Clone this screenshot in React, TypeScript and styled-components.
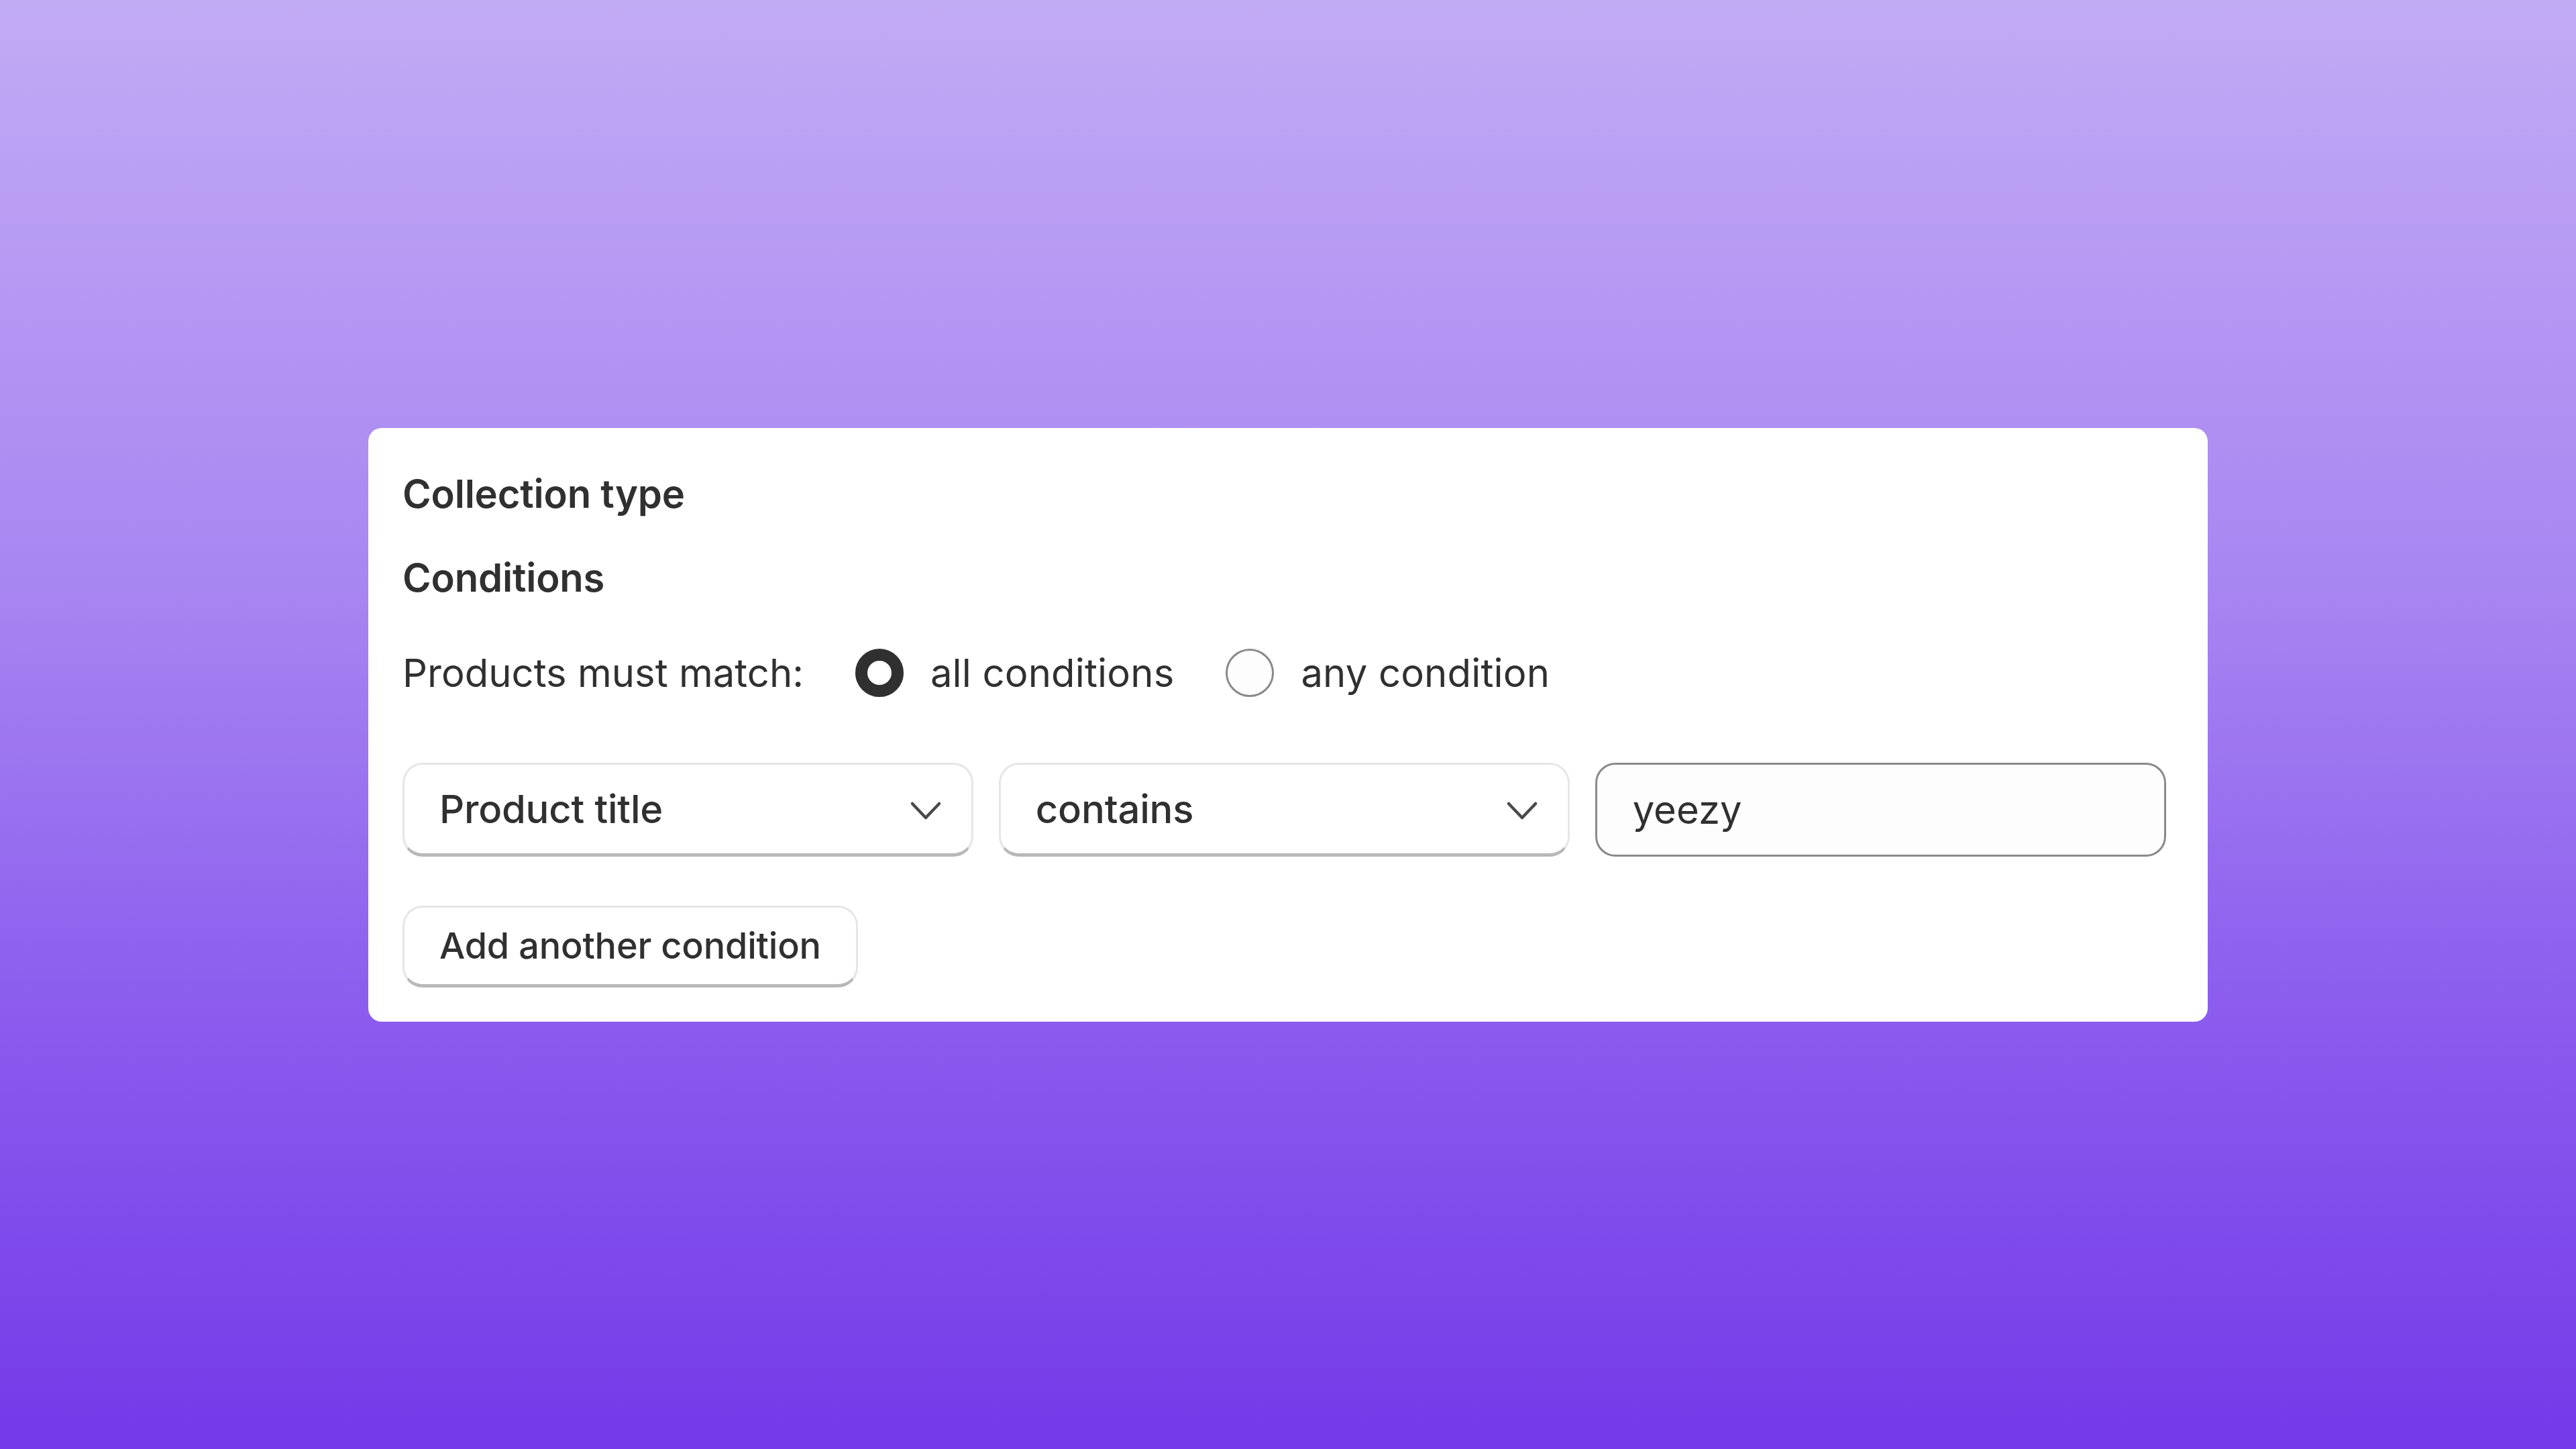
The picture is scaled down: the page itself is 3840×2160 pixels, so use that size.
import React from "react";
import styled, { createGlobalStyle } from "styled-components";

const GlobalStyle = createGlobalStyle`
  html, body {
    margin: 0;
    padding: 0;
  }
  body {
    font-family: Inter, "Noto Sans", "Liberation Sans", sans-serif;
    color: #303030;
  }
`;

const Page = styled.div`
  width: 100vw;
  height: 100vh;
  display: flex;
  align-items: center;
  justify-content: center;
  background: linear-gradient(180deg, #c2abf5 0%, #a886f1 40%, #8b5cee 70%, #7439e8 100%);
`;

const Card = styled.section`
  width: 2742px;
  box-sizing: border-box;
  padding: 63px 62px 51px 51px;
  background: #ffffff;
  border-radius: 20px;
  display: flex;
  flex-direction: column;
`;

const Heading = styled.h2<{ gapAfter: number }>`
  margin: 0 0 ${({ gapAfter }) => gapAfter}px;
  font-size: 58px;
  line-height: 70px;
  font-weight: 600;
  letter-spacing: -0.2px;
`;

const MatchRow = styled.div`
  display: flex;
  align-items: center;
  height: 72px;
  font-size: 58px;
  line-height: 70px;
  margin-bottom: 98px;
`;

const MatchLabel = styled.span`
  margin-right: 77px;
`;

const RadioOption = styled.label`
  display: flex;
  align-items: center;
  gap: 40px;
  margin-right: 77px;
  letter-spacing: 0.15px;
  cursor: pointer;
`;

const RadioDot = styled.span<{ checked: boolean }>`
  width: 72px;
  height: 72px;
  box-sizing: border-box;
  border-radius: 50%;
  border: ${({ checked }) => (checked ? "18px solid #303030" : "3px solid #8a8a8a")};
  background: ${({ checked }) => (checked ? "#ffffff" : "#fdfdfd")};
  flex-shrink: 0;
`;

const ConditionRow = styled.div`
  display: grid;
  grid-template-columns: repeat(3, 1fr);
  column-gap: 37.5px;
  margin-bottom: 73px;
`;

const SelectBox = styled.div`
  height: 140px;
  box-sizing: border-box;
  display: flex;
  align-items: center;
  justify-content: space-between;
  padding: 0 44px 0 52px;
  border: 3px solid #e6e6e6;
  border-bottom: 5px solid #b8b8b8;
  border-radius: 30px;
  background: #ffffff;
  font-size: 58px;
  line-height: 70px;
  font-weight: 500;
  letter-spacing: -0.2px;
`;

const TextInput = styled.div`
  height: 140px;
  box-sizing: border-box;
  display: flex;
  align-items: center;
  padding: 0 53px;
  border: 3px solid #8a8a8a;
  border-radius: 30px;
  background: #fdfdfd;
  font-size: 58px;
  line-height: 70px;
`;

const Chevron = styled.svg`
  width: 48px;
  height: 32px;
  margin-top: 6px;
  flex-shrink: 0;
`;

const AddButton = styled.button`
  align-self: flex-start;
  height: 122px;
  box-sizing: border-box;
  padding: 0 52px;
  border: 3px solid #e6e6e6;
  border-bottom: 5px solid #b8b8b8;
  border-radius: 30px;
  background: #ffffff;
  font-family: inherit;
  color: #303030;
  font-size: 54px;
  line-height: 64px;
  font-weight: 500;
  letter-spacing: -0.2px;
  cursor: pointer;
`;

const ChevronDown = () => (
  <Chevron viewBox="0 0 48 32" fill="none">
    <polyline
      points="4,5 24,26 44,5"
      stroke="#4a4a4a"
      strokeWidth="4.5"
      strokeLinecap="round"
      strokeLinejoin="round"
    />
  </Chevron>
);

const App = () => {
  const [match, setMatch] = React.useState<"all" | "any">("all");

  return (
    <Page>
      <GlobalStyle />
      <Card>
        <Heading gapAfter={55}>Collection type</Heading>
        <Heading gapAfter={71}>Conditions</Heading>
        <MatchRow>
          <MatchLabel>Products must match:</MatchLabel>
          <RadioOption onClick={() => setMatch("all")}>
            <RadioDot checked={match === "all"} />
            all conditions
          </RadioOption>
          <RadioOption onClick={() => setMatch("any")}>
            <RadioDot checked={match === "any"} />
            any condition
          </RadioOption>
        </MatchRow>
        <ConditionRow>
          <SelectBox>
            Product title
            <ChevronDown />
          </SelectBox>
          <SelectBox>
            contains
            <ChevronDown />
          </SelectBox>
          <TextInput>yeezy</TextInput>
        </ConditionRow>
        <AddButton>Add another condition</AddButton>
      </Card>
    </Page>
  );
};

export default App;
